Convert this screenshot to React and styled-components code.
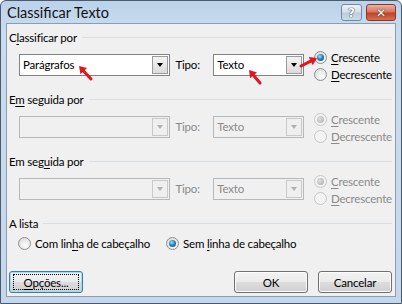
import styled, { createGlobalStyle } from 'styled-components';

const GlobalStyle = createGlobalStyle`
  html, body {
    margin: 0;
    padding: 0;
    background: #ffffff;
  }
  body {
    font-family: "Segoe UI", Lato, "Open Sans", sans-serif;
    font-size: 11.5px;
    letter-spacing: -0.2px;
    color: #000;
  }
`;

const Window = styled.div`
  position: relative;
  box-sizing: border-box;
  width: 402px;
  height: 304px;
  display: flex;
  flex-direction: column;
  padding: 0 5px 6px 5px;
  border: 1px solid #4b5b6b;
  border-radius: 6px 6px 0 0;
  background: linear-gradient(#bcd2ea, #cadcef 30px, #c4d7ec);
`;

const TitleBar = styled.div`
  height: 22px;
  display: flex;
  align-items: flex-start;
  justify-content: space-between;
`;

const Title = styled.div`
  padding: 3px 0 0 1px;
  font-size: 14.5px;
  letter-spacing: 0;
  line-height: 17px;
  color: #111;
`;

const CaptionButtons = styled.div`
  display: flex;
  gap: 4px;
  margin-top: 3px;
`;

const CaptionButton = styled.div`
  box-sizing: border-box;
  width: ${p => (p.$close ? 30 : 21)}px;
  height: 17px;
  border: 1px solid ${p => (p.$close ? '#8a3a2c' : '#7489a0')};
  border-radius: 3px;
  display: flex;
  align-items: center;
  justify-content: center;
  background: ${p =>
    p.$close
      ? 'linear-gradient(#eab3a4, #d9765e 45%, #c2412a 55%, #d8704f)'
      : 'linear-gradient(#edf3f9, #d3e0ee 45%, #bccee2 55%, #cbdbea)'};
  color: #fff;
  font-family: "DejaVu Sans", sans-serif;
  font-weight: bold;
  font-size: 12px;
  text-shadow: 0 0 1px #333, 0 0 1px #333;
`;

const Content = styled.div`
  flex: 1;
  display: flex;
  flex-direction: column;
  padding: 5px 3px 3px 2px;
  border: 1px solid #8a9db2;
  background: #f0f0f0;
`;

const Group = styled.div`
  display: flex;
  flex-direction: column;
  margin-bottom: 8px;
`;

const Header = styled.div`
  height: 16px;
  display: flex;
  align-items: center;
  gap: 5px;
`;

const HeaderLine = styled.div`
  flex: 1;
  height: 1px;
  background: #d9dee3;
`;

const Row = styled.div`
  display: flex;
  align-items: flex-start;
  margin-top: 9px;
  padding-left: 10px;
`;

const Combo = styled.div`
  box-sizing: border-box;
  width: ${p => p.$w}px;
  height: 22px;
  display: flex;
  align-items: stretch;
  border: 1px solid ${p => (p.$disabled ? '#b5b9bc' : '#7f8286')};
  background: ${p => (p.$disabled ? '#f0f0f0' : '#ffffff')};
`;

const ComboText = styled.div`
  flex: 1;
  padding-left: 3px;
  line-height: 20px;
  color: ${p => (p.$disabled ? '#8a8a8a' : '#000')};
`;

const ComboButton = styled.div`
  box-sizing: border-box;
  width: 16px;
  margin: 1px;
  display: flex;
  align-items: center;
  justify-content: center;
  border: 1px solid ${p => (p.$disabled ? '#c9c9c9' : '#9a9a9a')};
  background: ${p =>
    p.$disabled ? '#efefef' : 'linear-gradient(#f4f4f4, #dcdcdc)'};

  &::after {
    content: '';
    border-left: 3.5px solid transparent;
    border-right: 3.5px solid transparent;
    border-top: 4px solid ${p => (p.$disabled ? '#b0b0b0' : '#000')};
  }
`;

const TypeLabel = styled.div`
  width: 38px;
  margin-left: 5px;
  line-height: 22px;
  color: ${p => (p.$disabled ? '#8a8a8a' : '#000')};
`;

const RadioColumn = styled.div`
  display: flex;
  flex-direction: column;
  margin: -5px 0 0 10px;
`;

const RadioRow = styled.div`
  display: flex;
  align-items: center;
  gap: ${p => p.$gap || 0}px;
  margin-top: ${p => p.$mt || 0}px;
  padding-left: ${p => p.$pl || 0}px;
`;

const RadioItem = styled.div`
  height: 17px;
  display: flex;
  align-items: center;
  gap: 4px;
  color: ${p => (p.$disabled ? '#8a8a8a' : '#000')};
`;

const RadioCircle = styled.span`
  box-sizing: border-box;
  width: 13px;
  height: 13px;
  border-radius: 50%;
  display: flex;
  align-items: center;
  justify-content: center;
  border: 1px solid ${p => (p.$disabled ? '#c6c6c6' : '#8c8f93')};
  background: ${p =>
    p.$disabled
      ? '#f3f3f3'
      : 'radial-gradient(circle at 60% 65%, #ffffff, #e9e9e9 50%, #d2d2d2)'};

  &::after {
    content: '';
    display: ${p => (p.$checked ? 'block' : 'none')};
    width: 7px;
    height: 7px;
    border-radius: 50%;
    background: ${p =>
      p.$disabled
        ? 'radial-gradient(circle at 40% 40%, #e0e0e0, #a9a9a9)'
        : 'radial-gradient(circle at 40% 35%, #9fe3ff, #2b86b8 45%, #0c3f63)'};
  }
`;

const Footer = styled.div`
  margin-top: auto;
  display: flex;
  gap: 10px;
`;

const Button = styled.div`
  box-sizing: border-box;
  width: 74px;
  height: 22px;
  display: flex;
  align-items: center;
  justify-content: center;
  border: 1px solid ${p => (p.$focused ? '#3d7bad' : '#707070')};
  border-radius: 3px;
  background: linear-gradient(#f2f2f2, #ebebeb 48%, #dddddd 52%, #cfcfcf);
  box-shadow: ${p => (p.$focused ? 'inset 0 0 0 1px #9fdcf5' : 'inset 0 0 0 1px #fcfcfc')};
  margin-right: ${p => (p.$push ? 'auto' : '0')};
`;

const FocusRect = styled.span`
  box-sizing: border-box;
  width: 66px;
  height: 16px;
  display: flex;
  align-items: center;
  justify-content: center;
  border: 1px dotted #000;
`;

const Key = styled.span`
  text-decoration: underline;
  text-underline-offset: 2px;
`;

const Arrows = styled.svg`
  position: absolute;
  left: 0;
  top: 0;
  pointer-events: none;
`;

const Arrow = ({ x1, y1, x2, y2 }) => {
  const a = Math.atan2(y2 - y1, x2 - x1);
  const len = 7;
  const w = 4.5;
  const bx = x2 - Math.cos(a) * len;
  const by = y2 - Math.sin(a) * len;
  const px = -Math.sin(a) * w;
  const py = Math.cos(a) * w;
  return (
    <g>
      <line x1={x1} y1={y1} x2={bx} y2={by} stroke="#e4141b" strokeWidth="3" strokeLinecap="round" />
      <polygon
        points={`${x2},${y2} ${bx + px},${by + py} ${bx - px},${by - py}`}
        fill="#e4141b"
      />
    </g>
  );
};

const SortGroup = ({ label, value, disabled }) => (
  <Group>
    <Header>
      <span>{label}</span>
      <HeaderLine />
    </Header>
    <Row>
      <Combo $w={152} $disabled={disabled}>
        <ComboText $disabled={disabled}>{value}</ComboText>
        <ComboButton $disabled={disabled} />
      </Combo>
      <TypeLabel $disabled={disabled}>Tipo:</TypeLabel>
      <Combo $w={91} $disabled={disabled}>
        <ComboText $disabled={disabled}>Texto</ComboText>
        <ComboButton $disabled={disabled} />
      </Combo>
      <RadioColumn>
        <RadioItem $disabled={disabled}>
          <RadioCircle $checked $disabled={disabled} />
          <span>
            <Key>C</Key>rescente
          </span>
        </RadioItem>
        <RadioItem $disabled={disabled}>
          <RadioCircle $disabled={disabled} />
          <span>
            <Key>D</Key>ecrescente
          </span>
        </RadioItem>
      </RadioColumn>
    </Row>
  </Group>
);

export default function App() {
  return (
    <>
      <GlobalStyle />
      <Window>
        <TitleBar>
          <Title>Classificar Texto</Title>
          <CaptionButtons>
            <CaptionButton>?</CaptionButton>
            <CaptionButton $close>✕</CaptionButton>
          </CaptionButtons>
        </TitleBar>
        <Content>
          <SortGroup
            label={
              <>
                C<Key>l</Key>assificar por
              </>
            }
            value="Parágrafos"
          />
          <SortGroup
            label={
              <>
                E<Key>m</Key> seguida por
              </>
            }
            value=""
            disabled
          />
          <SortGroup
            label={
              <>
                Em seg<Key>u</Key>ida por
              </>
            }
            value=""
            disabled
          />
          <Group>
            <Header>
              <span>A lista</span>
              <HeaderLine />
            </Header>
            <RadioRow $gap={16} $mt={4} $pl={9}>
              <RadioItem>
                <RadioCircle />
                <span>
                  Com lin<Key>h</Key>a de cabeçalho
                </span>
              </RadioItem>
              <RadioItem>
                <RadioCircle $checked />
                <span>
                  Sem <Key>l</Key>inha de cabeçalho
                </span>
              </RadioItem>
            </RadioRow>
          </Group>
          <Footer>
            <Button $focused $push>
              <FocusRect>
                <span>
                  <Key>O</Key>pções...
                </span>
              </FocusRect>
            </Button>
            <Button>OK</Button>
            <Button>Cancelar</Button>
          </Footer>
        </Content>
        <Arrows width="402" height="304" viewBox="0 0 402 304">
          <Arrow x1={90} y1={78} x2={78} y2={65} />
          <Arrow x1={259} y1={82} x2={248} y2={69} />
          <Arrow x1={300} y1={65} x2={316} y2={57} />
        </Arrows>
      </Window>
    </>
  );
}
